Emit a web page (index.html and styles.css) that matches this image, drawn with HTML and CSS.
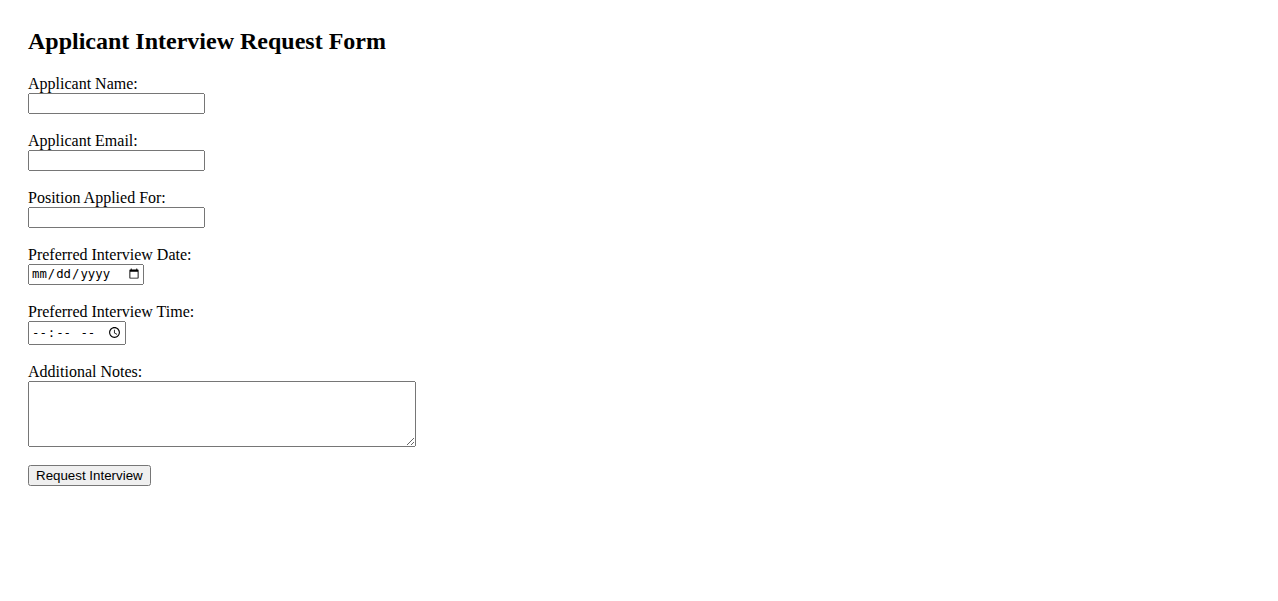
FILE: index.html
```html
<!DOCTYPE html>
<html>
<head>
<meta charset="utf-8">
<title>Applicant Interview Request Form</title>
<link rel="stylesheet" href="styles.css">
</head>
<body>
<h2 class="title">Applicant Interview Request Form</h2>
<form>
<label for="name">Applicant Name:</label><br>
<input class="field" type="text" id="name" name="name"><br><br>
<label for="email">Applicant Email:</label><br>
<input class="field" type="email" id="email" name="email"><br><br>
<label for="position">Position Applied For:</label><br>
<input class="field" type="text" id="position" name="position"><br><br>
<label for="date">Preferred Interview Date:</label><br>
<input class="date" type="date" id="date" name="date"><br><br>
<label for="time">Preferred Interview Time:</label><br>
<input class="time" type="time" id="time" name="time"><br><br>
<label for="notes">Additional Notes:</label><br>
<textarea class="notes" id="notes" name="notes" rows="4" cols="50"></textarea><br><br>
<input type="submit" value="Request Interview">
</form>
</body>
</html>
```
FILE: styles.css
```css
body {
  margin: 8px;
  padding: 20px;
  font-family: "Liberation Serif", "Times New Roman", serif;
}
.title {
  margin-top: 0;
}
.field {
  box-sizing: border-box;
  width: 177px;
}
.date {
  box-sizing: border-box;
  width: 116px;
  height: 21px;
  font-size: 12.3px;
}
.time {
  box-sizing: border-box;
  width: 98px;
  height: 24px;
  font-size: 12.3px;
}
.notes {
  box-sizing: border-box;
  width: 388px;
  height: 66px;
  vertical-align: bottom;
}
```
